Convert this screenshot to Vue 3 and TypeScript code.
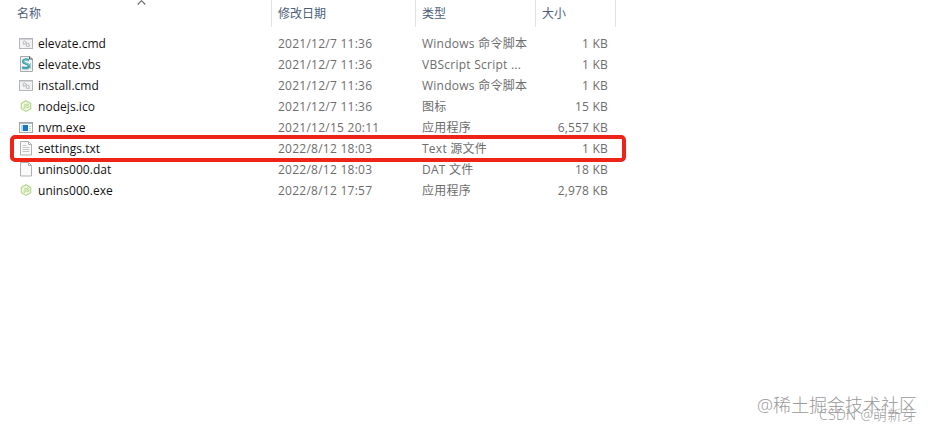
<script setup lang="ts">
type IconKind = 'cmd' | 'vbs' | 'node' | 'exe' | 'txt' | 'dat'

interface FileRow {
  name: string
  date: string
  type: string
  size: string
  icon: IconKind
  marked?: boolean
}

const files: FileRow[] = [
  { name: 'elevate.cmd', date: '2021/12/7 11:36', type: 'Windows 命令脚本', size: '1 KB', icon: 'cmd' },
  { name: 'elevate.vbs', date: '2021/12/7 11:36', type: 'VBScript Script ...', size: '1 KB', icon: 'vbs' },
  { name: 'install.cmd', date: '2021/12/7 11:36', type: 'Windows 命令脚本', size: '1 KB', icon: 'cmd' },
  { name: 'nodejs.ico', date: '2021/12/7 11:36', type: '图标', size: '15 KB', icon: 'node' },
  { name: 'nvm.exe', date: '2021/12/15 20:11', type: '应用程序', size: '6,557 KB', icon: 'exe' },
  { name: 'settings.txt', date: '2022/8/12 18:03', type: 'Text 源文件', size: '1 KB', icon: 'txt', marked: true },
  { name: 'unins000.dat', date: '2022/8/12 18:03', type: 'DAT 文件', size: '18 KB', icon: 'dat' },
  { name: 'unins000.exe', date: '2022/8/12 17:57', type: '应用程序', size: '2,978 KB', icon: 'node' },
]
</script>

<template>
  <main class="explorer">
    <header class="grid head">
      <div class="col first">
        <span>名称</span>
        <svg class="sort" width="9" height="5" viewBox="0 0 9 5"><path d="M.7 4.5 4.5.7l3.8 3.8" fill="none" stroke="#666" stroke-width="1.1" /></svg>
      </div>
      <div class="col">修改日期</div>
      <div class="col">类型</div>
      <div class="col">大小</div>
    </header>
    <section class="rows">
      <div v-for="f in files" :key="f.name" class="grid row" :class="{ marked: f.marked }">
        <div class="name">
          <svg class="icon" width="16" height="16" viewBox="0 0 16 16" fill="none">
            <g v-if="f.icon === 'cmd'">
              <rect x="1.5" y="3.5" width="13" height="10" fill="#f3f3f4" stroke="#b3b6ba" />
              <path d="M2 4.5h12" stroke="#d3d5d8" />
              <circle cx="6.5" cy="7.5" r="1.5" stroke="#b2b5b9" />
              <circle cx="9.7" cy="10" r="1.6" stroke="#b2b5b9" />
              <path d="M5 9l1 .5M8 7l1 .8M11.6 8l.5-.5M11.5 11.5l.8.6" stroke="#c0c3c6" />
            </g>
            <g v-else-if="f.icon === 'vbs'">
              <path d="M2.5.5h9L14.500 3v12.500H2.500z" fill="#f1f5f6" stroke="#a4abae" />
              <path d="M11.500.5V3h3" stroke="#4c5355" />
              <path d="M10.800 4.400C8.800 3 5 3.400 5.200 5.800c.2 2.200 5.800 1.500 5.800 4.200 0 2.300-4.400 2.500-6.900 1.200" stroke="#3b9ca5" stroke-width="2.400" />
              <path d="M10 4.500C8 3.500 5.400 4 5.800 5.600c.3 1.800 5.700 1.500 5.200 4.300" stroke="#8ad7d8" />
              <path d="M4 13.200h6.500M12.600 7v6" stroke="#a3c4c7" />
            </g>
            <g v-else-if="f.icon === 'node'">
              <path d="M8 2.700l4.700 2.700v5.300L8 13.400l-4.700-2.700V5.400z" fill="#f0f6e4" stroke="#b8d78e" stroke-width="1.200" />
              <path d="M7.100 5.900v3.600c0 .9-.7 1.100-1.600.6M10.600 6.500c-.9-.7-2-.5-2 .3 0 1.100 2.200.6 2.200 1.800 0 1.100-1.600 1.200-2.400.5" stroke="#a9cf76" />
            </g>
            <g v-else-if="f.icon === 'exe'">
              <rect x="1.5" y="3.500" width="13" height="10" fill="#f8fafb" stroke="#a0a8af" />
              <path d="M2 4.500h12" stroke="#b2bdc6" />
              <path d="M3 6h2v6H3z" fill="#b5dcf5" />
              <path d="M5 6h5v6H5z" fill="#1676ca" />
              <path d="M11 7.500h2M11 9.500h2M11 11.500h2" stroke="#c4cbd1" />
            </g>
            <g v-else>
              <path d="M2.500 1.500h8l3 3v10.500h-11z" fill="#fafafa" stroke="#aeb0b1" />
              <path d="M10.500 1.500v3h3" stroke="#aeb0b1" />
              <path v-if="f.icon === 'txt'" d="M4.500 5.500h4M4.500 7.500h7M4.500 9.500h7M4.500 11.500h7" stroke="#c3c5c6" />
            </g>
          </svg>
          <span>{{ f.name }}</span>
        </div>
        <div class="cell date">{{ f.date }}</div>
        <div class="cell">{{ f.type }}</div>
        <div class="size">{{ f.size }}</div>
      </div>
    </section>
    <div class="watermark community">@稀土掘金技术社区</div>
    <div class="watermark author">CSDN @萌新芽</div>
  </main>
</template>

<style>
body {
  margin: 0;
  background: #fff;
}
</style>

<style scoped>
.explorer {
  position: relative;
  width: 932px;
  height: 431px;
  overflow: hidden;
  background: #fff;
  font: 12px/21px "Open Sans", "Noto Sans CJK SC", sans-serif;
  color: #6d6d6d;
  white-space: nowrap;
}
.grid {
  display: grid;
  grid-template-columns: 272px 144px 120px 80px;
  width: 616px;
}
.head {
  height: 27px;
  line-height: 28px;
  color: #4c607a;
}
.col {
  position: relative;
  box-sizing: border-box;
  height: 27px;
  padding-left: 6px;
  border-right: 1px solid #e2e2e2;
}
.first {
  padding-left: 17px;
}
.sort {
  position: absolute;
  left: 137px;
  top: 0;
}
.rows {
  padding-top: 6px;
}
.row {
  position: relative;
  height: 21px;
}
.name {
  display: flex;
  align-items: center;
  gap: 4px;
  padding-left: 18px;
  color: #111;
  letter-spacing: 0.04px;
}
.icon {
  flex: none;
  height: 16px;
  margin-bottom: 1px;
}
.cell {
  padding-left: 6px;
  letter-spacing: 0.25px;
}
.size {
  padding-right: 8px;
  text-align: right;
  letter-spacing: 0.2px;
}
.marked::after {
  content: "";
  position: absolute;
  box-sizing: border-box;
  left: 10px;
  top: -3px;
  width: 616px;
  height: 27px;
  border: 4px solid #ee2419;
  border-radius: 5px;
}
.watermark {
  position: absolute;
  font-weight: 300;
}
.community {
  right: 15px;
  top: 392px;
  font-size: 18px;
  line-height: 26px;
  color: #999;
}
.author {
  right: 16px;
  top: 404px;
  font-size: 14px;
  line-height: 22px;
  letter-spacing: 0.3px;
  color: #999;
}
</style>
